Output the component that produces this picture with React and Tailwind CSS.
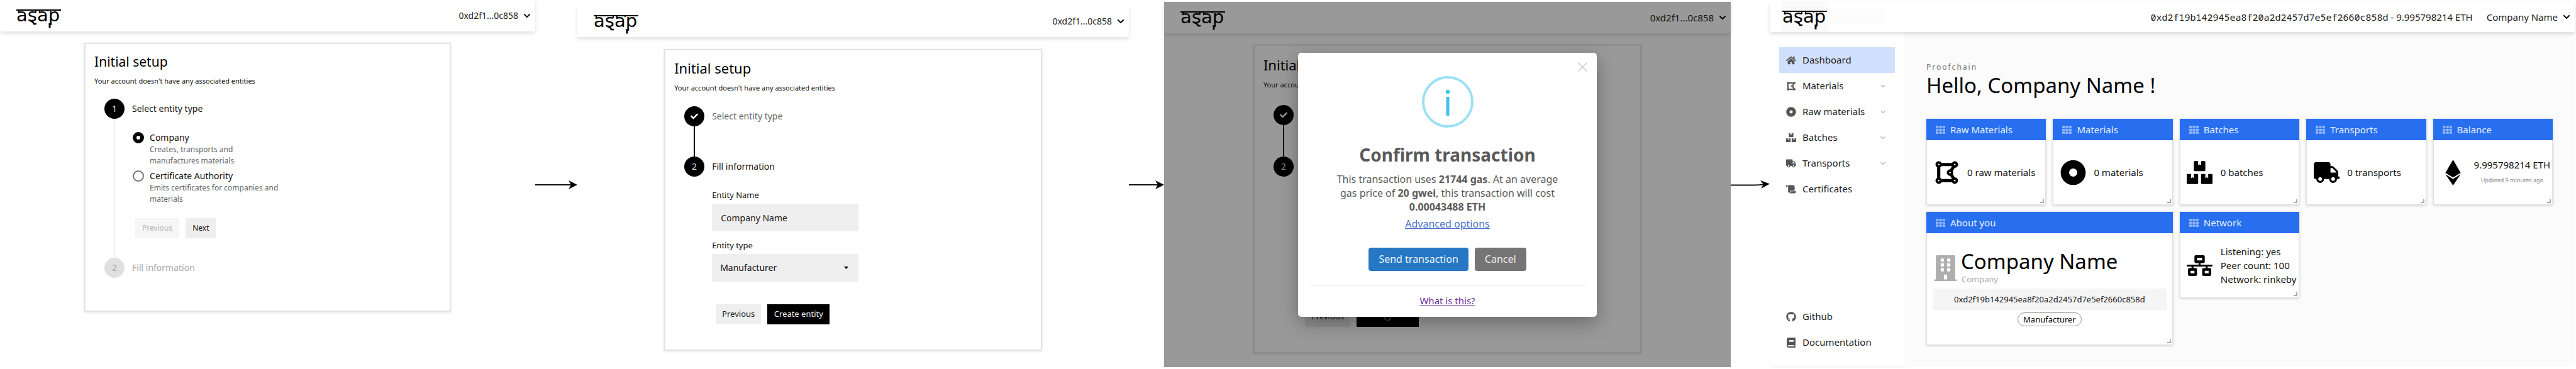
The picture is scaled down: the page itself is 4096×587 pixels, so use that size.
import React from "react";
import {
  FaBook,
  FaBoxes,
  FaBuilding,
  FaCheck,
  FaChevronDown,
  FaDotCircle,
  FaDrawPolygon,
  FaEthereum,
  FaGithub,
  FaHome,
  FaNetworkWired,
  FaScroll,
  FaTh,
  FaTruck,
} from "react-icons/fa";
import { ChevronDown } from "lucide-react";

const ADDRESS = "0xd2f19b142945ea8f20a2d2457d7e5ef2660c858d";

function Logo() {
  return (
    <svg viewBox="0 0 71 40" className="h-10 w-[71px] shrink-0" role="img" aria-label="asap">
      <rect x="0" y="10" width="71" height="2" />
      <text x="0" y="29" fontSize="29" fontFamily="DejaVu Sans, sans-serif">
        asap
      </text>
      <g fill="none" stroke="#000" strokeWidth="2">
        <path d="M4 11v5M37 11v5M31 11v4M50 13V11" />
        <path d="M53 32v7.500" strokeWidth="3" />
        <path d="M22 28c3 1 5 2 6 5h4" strokeWidth="2.500" />
      </g>
    </svg>
  );
}

function AccountButton({ label, size }) {
  return (
    <button type="button" className={`flex items-center gap-2 text-[#222] ${size}`}>
      {label}
      <FaChevronDown className="h-3 w-auto text-black" />
    </button>
  );
}

function TopBar({ height, children }) {
  return (
    <header
      className={`relative flex items-center justify-between bg-white pr-[7px] pl-[26px] shadow-[0_3px_6px_rgba(0,0,0,0.13)] ${height}`}
    >
      <Logo />
      {children}
    </header>
  );
}

function Arrow({ tilt = 0 }) {
  return (
    <div className="flex h-screen items-center" aria-hidden="true">
      <svg viewBox="0 0 67 14" preserveAspectRatio="xMaxYMid slice" className="h-[14px] w-full">
        <path d={tilt ? "M0 7.500H44L58 6.500" : "M0 7H58"} stroke="#111" strokeWidth="1.800" fill="none" />
        <path d={tilt ? "M52 0L67 5.500L53 13L57 6.500Z" : "M53 0L67 7L53 14L57 7Z"} />
      </svg>
    </div>
  );
}

function SetupCard({ className, titleSize, children }) {
  return (
    <section
      className={`mx-auto w-[68.5%] border-2 border-[#e4e4e4] bg-white px-[14px] shadow-[0_1px_4px_rgba(0,0,0,0.12)] ${className}`}
    >
      <h1 className={titleSize}>Initial setup</h1>
      <p className="mt-[9px] text-[11px] leading-4 text-[#111]">
        Your account doesn't have any associated entities
      </p>
      {children}
    </section>
  );
}

function Step({ badge, title, tone = "active", line, children }) {
  const badgeTone = tone === "idle" ? "bg-[#e0e0e0] text-[#aaa]" : "bg-black text-[#ddd]";
  const titleTone = { active: "text-[#111]", done: "text-[#666]", idle: "text-[#aaa]" }[tone];
  return (
    <li className="flex gap-3">
      <div className="flex flex-col items-center">
        <span className={`flex size-8 items-center justify-center rounded-full text-sm ${badgeTone}`}>{badge}</span>
        {line && <span className={`w-[2px] flex-1 ${line}`} />}
      </div>
      <div className="min-w-0 flex-1">
        <h2 className={`text-sm leading-8 ${titleTone}`}>{title}</h2>
        {children}
      </div>
    </li>
  );
}

function EntityOption({ id, label, text, checked }) {
  return (
    <div className="flex gap-[9px]">
      <input
        type="radio"
        id={id}
        name="entity-kind"
        defaultChecked={checked}
        className="mt-px size-[18px] shrink-0 appearance-none rounded-full border-2 border-[#777] bg-white checked:border-[6px] checked:border-black"
      />
      <label htmlFor={id} className="block w-[212px]">
        <span className="block text-sm leading-5 text-[#111]">{label}</span>
        <span className="block text-xs leading-[18px] text-[#666]">{text}</span>
      </label>
    </div>
  );
}

function EntityForm({ id, busy, buttonsGap }) {
  return (
    <form className="pt-5" onSubmit={(e) => e.preventDefault()}>
      <div className={`w-[233px] ${busy ? "invisible" : ""}`}>
        <label htmlFor={`${id}-name`} className="block text-[13px] leading-[18px] text-[#111]">
          Entity Name
        </label>
        <input
          id={`${id}-name`}
          type="text"
          defaultValue="Company Name"
          className="mt-[5px] h-11 w-full bg-[#eee] px-[14px] text-sm text-[#222]"
        />
        <label htmlFor={`${id}-type`} className="mt-[13px] block text-[13px] leading-[18px] text-[#111]">
          Entity type
        </label>
        <div className="relative mt-[5px]">
          <select
            id={`${id}-type`}
            defaultValue="Manufacturer"
            className="h-11 w-full appearance-none bg-[#eee] px-[13px] text-sm text-[#111]"
          >
            <option>Manufacturer</option>
          </select>
          <span className="pointer-events-none absolute inset-y-0 right-4 flex items-center">
            <svg viewBox="0 0 7 4" className="h-1 w-[7px]">
              <path d="M0 0h7L3.500 4z" />
            </svg>
          </span>
        </div>
      </div>
      <div className={`flex gap-[10px] pl-[6px] ${buttonsGap}`}>
        <button type="button" className="h-8 bg-[#eee] px-[10px] text-[13px] text-[#222]">
          Previous
        </button>
        <button
          type="submit"
          aria-label="Create entity"
          className="flex h-8 min-w-[99px] items-center justify-center bg-black px-[10px] text-[13px] text-[#eee]"
        >
          {busy ? <span className="size-[11px] rounded-full border border-[#bbb]" /> : "Create entity"}
        </button>
      </div>
    </form>
  );
}

function SelectTypeScreen() {
  return (
    <div>
      <TopBar height="h-[50px]">
        <AccountButton label="0xd2f1...0c858" size="text-sm" />
      </TopBar>
      <SetupCard className="mt-[18px] pt-[14px] pb-[52px]" titleSize="text-[21px] leading-7">
        <ol className="mt-5 pl-4">
          <Step badge="1" title="Select entity type" line="bg-[#eee]">
            <fieldset className="mt-5 flex flex-col gap-[5px] pl-px">
              <EntityOption id="kind-company" label="Company" text="Creates, transports and manufactures materials" checked />
              <EntityOption
                id="kind-authority"
                label="Certificate Authority"
                text="Emits certificates for companies and materials"
              />
            </fieldset>
            <div className="mt-[21px] mb-[31px] flex gap-[10px] pl-[5px] text-xs">
              <button type="button" disabled className="h-8 bg-[#f6f6f6] px-[11px] text-[#b5b5b5]">
                Previous
              </button>
              <button type="button" className="h-8 bg-[#eee] px-[11px] text-[#111]">
                Next
              </button>
            </div>
          </Step>
          <Step badge="2" title="Fill information" tone="idle" />
        </ol>
      </SetupCard>
    </div>
  );
}

function FillInfoScreen() {
  return (
    <div className="pt-2">
      <TopBar height="h-[51px]">
        <AccountButton label="0xd2f1...0c858" size="text-sm" />
      </TopBar>
      <SetupCard className="mt-[19px] pt-[14px] pb-10" titleSize="text-[22px] leading-[29px]">
        <ol className="mt-[21px] pl-4">
          <Step badge={<FaCheck className="size-3 text-white" />} title="Select entity type" tone="done" line="bg-black">
            <div className="h-12" />
          </Step>
          <Step badge="2" title="Fill information">
            <EntityForm id="fill" buttonsGap="mt-9" />
          </Step>
        </ol>
      </SetupCard>
    </div>
  );
}

function ConfirmDialog() {
  return (
    <div
      role="dialog"
      aria-label="Confirm transaction"
      className="relative flex w-[475px] flex-col items-center rounded-[5px] bg-white px-[18px] pt-[37px] pb-[15px] text-base leading-[22px] text-[#595959] shadow-[0_10px_30px_rgba(0,0,0,0.3)]"
    >
      <button type="button" aria-label="Close" className="absolute top-[15px] right-[15px]">
        <svg viewBox="0 0 15 15" className="size-[15px]" stroke="#ccc" strokeWidth="1.500" fill="none">
          <path d="M.5.5l14 14M14.500.5l-14 14" />
        </svg>
      </button>
      <svg viewBox="0 0 82 82" className="size-[82px]" aria-hidden="true">
        <circle cx="41" cy="41" r="39" fill="none" stroke="#9de0f6" strokeWidth="4" />
        <circle cx="41" cy="25" r="3.200" fill="#3fc3ee" />
        <rect x="38.500" y="33" width="5" height="30" fill="#3fc3ee" />
      </svg>
      <h2 className="mt-6 text-[28px] leading-[38px] font-bold">Confirm transaction</h2>
      <p className="mt-[9px] w-[380px] text-center">
        This transaction uses <b>21744 gas</b>. At an average gas price of <b>20 gwei</b>, this transaction will cost{" "}
        <b>0.00043488 ETH</b>
      </p>
      <a href="#advanced" className="mt-[5px] text-[#4a70cc] underline">
        Advanced options
      </a>
      <div className="mt-[27px] flex gap-[10px]">
        <button type="button" className="h-[37px] rounded bg-[#2778c4] px-4 text-[#eef4fb]">
          Send transaction
        </button>
        <button type="button" className="h-[37px] rounded bg-[#757575] px-4 text-[#eee]">
          Cancel
        </button>
      </div>
      <div className="mt-[23px] flex w-full justify-center border-t border-[#eee] pt-[12px]">
        <a href="#help" className="text-[15px] text-[#6b2fa0] underline">
          What is this?
        </a>
      </div>
    </div>
  );
}

function ConfirmScreen() {
  return (
    <div className="relative my-[3px] bg-white">
      <TopBar height="h-[50px]">
        <AccountButton label="0xd2f1...0c858" size="text-[15px]" />
      </TopBar>
      <SetupCard className="mt-[18px] pt-4 pb-10" titleSize="text-[22px] leading-[29px]">
        <ol className="mt-6 pl-4">
          <Step badge={<FaCheck className="size-3 text-white" />} title="Select entity type" tone="done" line="bg-black">
            <div className="h-[50px]" />
          </Step>
          <Step badge="2" title="Fill information">
            <EntityForm id="confirm" busy buttonsGap="mt-10" />
          </Step>
        </ol>
      </SetupCard>
      <div className="absolute inset-0 flex items-center justify-center bg-black/40">
        <ConfirmDialog />
      </div>
    </div>
  );
}

function NavItem({ icon: Icon, label, active, expandable }) {
  return (
    <a
      href={`#${label.toLowerCase().replace(" ", "-")}`}
      className={`flex h-[41px] items-center gap-[10px] px-[11px] text-[15px] text-[#222] ${active ? "bg-[#d1e0fc]" : ""}`}
    >
      <Icon className="h-4 w-auto shrink-0 text-[#555]" />
      <span className="flex-1">{label}</span>
      {expandable && <ChevronDown className="mr-[2px] size-3 text-[#777]" />}
    </a>
  );
}

function Widget({ title, className = "min-h-[137px]", children }) {
  return (
    <section
      className={`relative flex flex-col border border-[#e2e2e2] bg-white shadow-[0_1px_4px_rgba(0,0,0,0.18)] ${className}`}
    >
      <h2 className="-mx-px -mt-px flex h-[34px] items-center gap-2 bg-[#286ff0] px-[15px] text-[15px] text-[#e6effe]">
        <FaTh className="size-[15px] text-[#8fb5f8]" />
        {title}
      </h2>
      {children}
      <span className="absolute right-[2px] bottom-[2px] size-[6px] border-r-2 border-b-2 border-[#aaa]" />
    </section>
  );
}

function Stat({ icon: Icon, children }) {
  return (
    <div className="flex flex-1 items-center">
      <span className="flex w-[62px] shrink-0 justify-center">
        <Icon className="h-[41px] w-auto" />
      </span>
      <div className="pl-[2px] text-[15px] leading-[22px] whitespace-nowrap text-[#111]">{children}</div>
    </div>
  );
}

function DashboardScreen() {
  return (
    <div className="mt-[3px] mb-1 flex flex-col bg-white">
      <header className="relative flex h-12 items-center justify-between bg-white pr-[7px] pl-[18px] shadow-[0_3px_6px_rgba(0,0,0,0.13)]">
        <div className="flex items-center">
          <div className="flex h-12 items-center bg-[#fafafa] px-[2px]">
            <Logo />
          </div>
          <div className="h-[26px] w-[89px] bg-[#fcfcfc]" />
        </div>
        <div className="flex items-center gap-[22px] text-[15px] text-[#222]">
          <p>
            <span className="font-['Noto_Sans_Mono','DejaVu_Sans_Mono',monospace]">{ADDRESS}</span> - 9.995798214 ETH
          </p>
          <AccountButton label="Company Name" size="text-[15px]" />
        </div>
      </header>
      <div className="flex flex-1">
        <nav className="flex w-[214px] shrink-0 flex-col justify-between px-[15px] pt-6 pb-[18px] shadow-[2px_0_4px_rgba(0,0,0,0.12)]">
          <div>
            <NavItem icon={FaHome} label="Dashboard" active />
            <NavItem icon={FaDrawPolygon} label="Materials" expandable />
            <NavItem icon={FaDotCircle} label="Raw materials" expandable />
            <NavItem icon={FaBoxes} label="Batches" expandable />
            <NavItem icon={FaTruck} label="Transports" expandable />
            <NavItem icon={FaScroll} label="Certificates" />
          </div>
          <div>
            <NavItem icon={FaGithub} label="Github" />
            <NavItem icon={FaBook} label="Documentation" />
          </div>
        </nav>
        <main className="min-w-0 flex-1 bg-[#fbfbfb] px-[35px] pt-12">
          <p className="text-xs leading-4 tracking-[2px] text-[#777]">Proofchain</p>
          <h1 className="text-[33px] leading-[42px]">Hello, Company Name !</h1>
          <div className="mt-8 grid grid-cols-5 items-start gap-[11px]">
            <Widget title="Raw Materials">
              <Stat icon={FaDrawPolygon}>0 raw materials</Stat>
            </Widget>
            <Widget title="Materials">
              <Stat icon={FaDotCircle}>0 materials</Stat>
            </Widget>
            <Widget title="Batches">
              <Stat icon={FaBoxes}>0 batches</Stat>
            </Widget>
            <Widget title="Transports">
              <Stat icon={FaTruck}>0 transports</Stat>
            </Widget>
            <Widget title="Balance">
              <Stat icon={FaEthereum}>
                <p>9.995798214 ETH</p>
                <p className="mt-[3px] text-center text-[9px] text-[#888]">Updated 9 minutes ago</p>
              </Stat>
            </Widget>
            <Widget title="About you" className="col-span-2 min-h-[212px]">
              <div className="flex flex-col px-[9px] pt-6">
                <div className="flex items-end gap-1">
                  <FaBuilding className="mb-1 h-[41px] w-auto text-[#aeaeae]" />
                  <div>
                    <p className="text-[33px] leading-[42px]">Company Name</p>
                    <p className="pl-px text-[13px] leading-[14px] text-[#aaa]">Company</p>
                  </div>
                </div>
                <p className="mt-2 bg-[#f5f5f5] text-center text-[13px] leading-[34px] text-[#111]">{ADDRESS}</p>
                <span className="mt-1 self-center rounded-full border border-[#999] px-2 text-[13px] leading-5">
                  Manufacturer
                </span>
              </div>
            </Widget>
            <Widget title="Network">
              <Stat icon={FaNetworkWired}>
                <p>Listening: yes</p>
                <p>Peer count: 100</p>
                <p>Network: rinkeby</p>
              </Stat>
            </Widget>
          </div>
        </main>
      </div>
    </div>
  );
}

export default function App() {
  return (
    <div className="grid min-h-screen grid-cols-[851fr_67fr_877fr_56fr_901fr_62fr_1280fr_2fr] bg-white font-['Noto_Sans',sans-serif] text-black">
      <SelectTypeScreen />
      <Arrow />
      <FillInfoScreen />
      <Arrow />
      <ConfirmScreen />
      <Arrow tilt={1} />
      <DashboardScreen />
    </div>
  );
}
